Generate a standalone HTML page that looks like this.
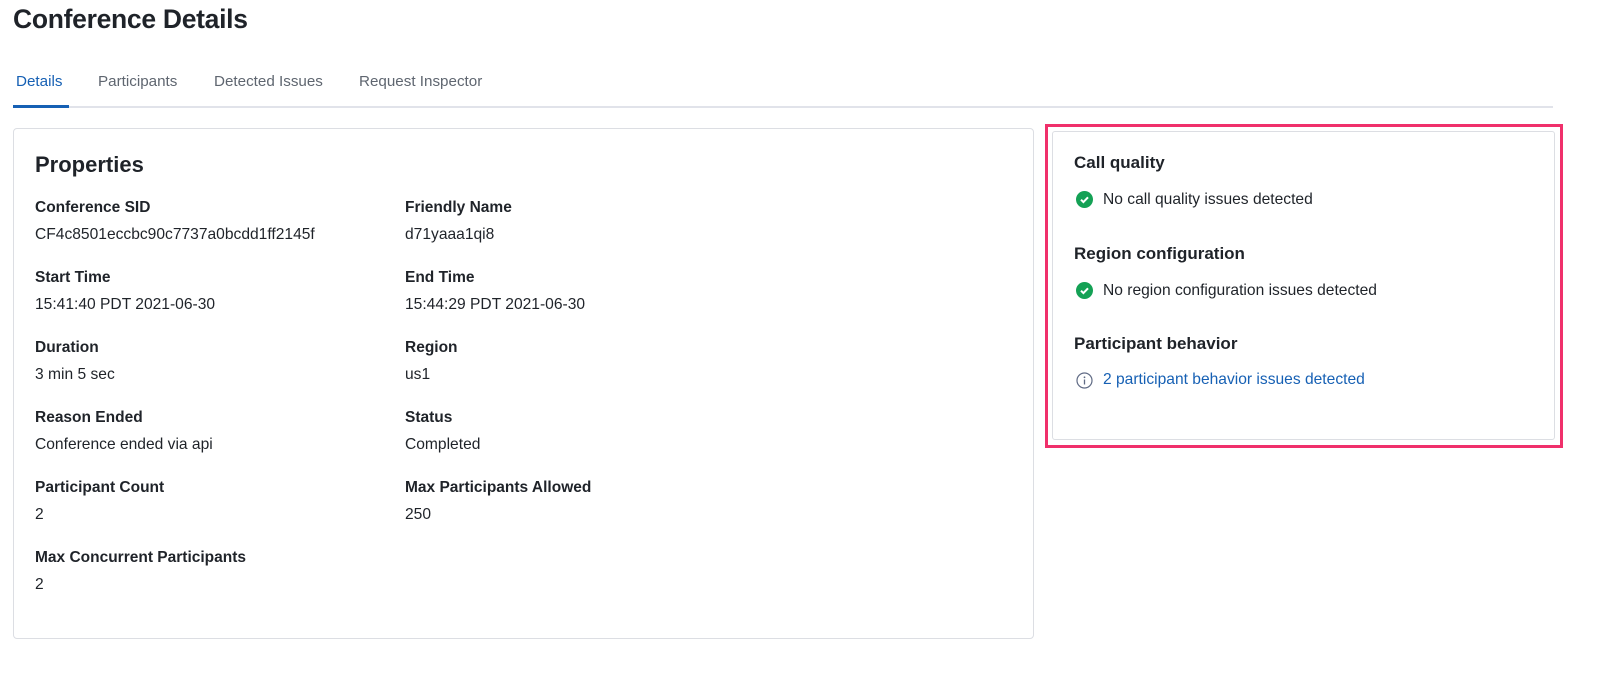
<!DOCTYPE html>
<html><head><style>
body{margin:0;width:1600px;height:678px;background:#fff;font-family:"Liberation Sans",sans-serif;color:#1f2329;position:relative;overflow:hidden}
.a{position:absolute;white-space:nowrap}
h1{position:absolute;left:13px;top:4px;margin:0;font-size:26.5px;font-weight:bold;letter-spacing:-0.3px}
.tab{position:absolute;top:73px;font-size:15.2px;color:#5f6670}
.lbl{font-size:15.5px;font-weight:bold}
.val{font-size:15.6px}
.h3{font-size:17px;font-weight:bold}
</style></head><body>
<h1>Conference Details</h1>
<div class="tab" style="left:16px;color:#1660b4">Details</div>
<div class="tab" style="left:98px">Participants</div>
<div class="tab" style="left:214px">Detected Issues</div>
<div class="tab" style="left:359px">Request Inspector</div>
<div class="a" style="left:13px;top:106px;width:1540px;height:2px;background:#e1e3ea"></div>
<div class="a" style="left:13px;top:105px;width:56px;height:3px;background:#1660b4"></div>

<div class="a" style="left:13px;top:128px;width:1019px;height:509px;border:1px solid #dcdee3;border-radius:4px"></div>
<div class="a" style="left:35px;top:152px;font-size:22px;font-weight:bold">Properties</div>

<div class="a lbl" style="left:35px;top:199px">Conference SID</div>
<div class="a val" style="left:35px;top:226px">CF4c8501eccbc90c7737a0bcdd1ff2145f</div>
<div class="a lbl" style="left:405px;top:199px">Friendly Name</div>
<div class="a val" style="left:405px;top:226px">d71yaaa1qi8</div>

<div class="a lbl" style="left:35px;top:269px">Start Time</div>
<div class="a val" style="left:35px;top:296px">15:41:40 PDT 2021-06-30</div>
<div class="a lbl" style="left:405px;top:269px">End Time</div>
<div class="a val" style="left:405px;top:296px">15:44:29 PDT 2021-06-30</div>

<div class="a lbl" style="left:35px;top:339px">Duration</div>
<div class="a val" style="left:35px;top:366px">3 min 5 sec</div>
<div class="a lbl" style="left:405px;top:339px">Region</div>
<div class="a val" style="left:405px;top:366px">us1</div>

<div class="a lbl" style="left:35px;top:409px">Reason Ended</div>
<div class="a val" style="left:35px;top:436px">Conference ended via api</div>
<div class="a lbl" style="left:405px;top:409px">Status</div>
<div class="a val" style="left:405px;top:436px">Completed</div>

<div class="a lbl" style="left:35px;top:479px">Participant Count</div>
<div class="a val" style="left:35px;top:506px">2</div>
<div class="a lbl" style="left:405px;top:479px">Max Participants Allowed</div>
<div class="a val" style="left:405px;top:506px">250</div>

<div class="a lbl" style="left:35px;top:549px">Max Concurrent Participants</div>
<div class="a val" style="left:35px;top:576px">2</div>

<div class="a" style="left:1045px;top:124px;width:512px;height:318px;border:3px solid #f0306b"></div>
<div class="a" style="left:1052px;top:131px;width:501px;height:307px;border:1px solid #dcdee3;border-radius:3px"></div>

<div class="a h3" style="left:1074px;top:153px">Call quality</div>
<svg class="a" style="left:1076px;top:191px" width="17" height="17" viewBox="0 0 17 17"><circle cx="8.5" cy="8.5" r="8.5" fill="#14a155"/><path d="M5 8.7l2.4 2.4 4.6-4.8" stroke="#fff" stroke-width="2" fill="none"/></svg>
<div class="a val" style="left:1103px;top:191px">No call quality issues detected</div>

<div class="a h3" style="left:1074px;top:244px">Region configuration</div>
<svg class="a" style="left:1076px;top:282px" width="17" height="17" viewBox="0 0 17 17"><circle cx="8.5" cy="8.5" r="8.5" fill="#14a155"/><path d="M5 8.7l2.4 2.4 4.6-4.8" stroke="#fff" stroke-width="2" fill="none"/></svg>
<div class="a val" style="left:1103px;top:282px">No region configuration issues detected</div>

<div class="a h3" style="left:1074px;top:334px">Participant behavior</div>
<svg class="a" style="left:1076px;top:372px" width="17" height="17" viewBox="0 0 17 17"><circle cx="8.5" cy="8.5" r="7.5" fill="none" stroke="#606b85" stroke-width="1.2"/><circle cx="8.5" cy="5.3" r="0.9" fill="#606b85"/><path d="M8.5 7.5v5" stroke="#606b85" stroke-width="1.3"/></svg>
<div class="a val" style="left:1103px;top:371px;color:#1660b4">2 participant behavior issues detected</div>
</body></html>
